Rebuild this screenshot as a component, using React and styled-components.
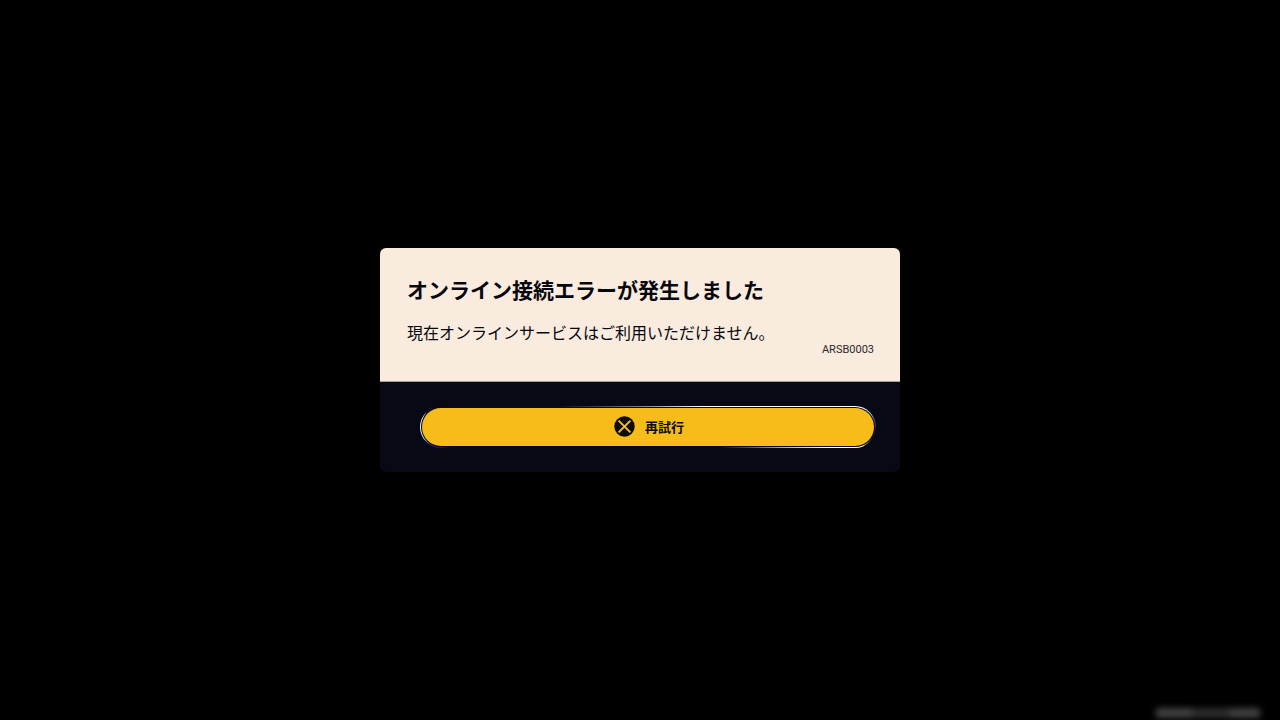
import React from 'react';
import styled, { createGlobalStyle } from 'styled-components'

const GlobalStyle = createGlobalStyle`
  * {
    box-sizing: border-box;
  }

  body {
    margin: 0;
    background-color: #000;
    font-family: 'Noto Sans CJK JP', sans-serif;
  }
`

const Screen = styled.main`
  display: flex;
  align-items: center;
  justify-content: center;
  min-height: 100vh;
`

const Dialog = styled.section`
  width: 100%;
  max-width: 520px;
  border-radius: 6px;
  overflow: hidden;
  background-color: #070914;
`

const Message = styled.div`
  display: flex;
  flex-direction: column;
  padding: 26px 26px 24px 27px;
  background-color: #f9ecdf;
  border-bottom: 1px solid #a9a29d;
  color: #07070d;
`

const Title = styled.h1`
  margin: 0 0 17px;
  font-size: 21px;
  font-weight: 700;
  line-height: 30px;
`

const Text = styled.p`
  margin: 0;
  font-size: 16px;
  line-height: 22px;
`

const ErrorCode = styled.span`
  align-self: flex-end;
  font-family: Roboto, sans-serif;
  font-size: 11px;
  line-height: 14px;
  color: #2b2729;
`

const Actions = styled.div`
  padding: 24px 24px 24px 40px;
`

/* light that runs round the focused button, one gradient for each half */
const FocusRing = styled.div`
  padding: 1px;
  border-radius: 21px;
  background-image:
    linear-gradient(
      to right,
      #e8f4f5 0,
      #e8f4f5 3px,
      transparent 7px,
      transparent 30%,
      #8d8b95 50%,
      #fff 62%,
      #fff calc(100% - 10px),
      #8fd0ee calc(100% - 4px),
      #6a1fa8 calc(100% - 1px)
    ),
    linear-gradient(
      to right,
      #fff 0,
      #e8f4f5 2px,
      #79bde6 5px,
      #5b1696 10px,
      transparent 32px,
      transparent 66%,
      #b9aecb 80%,
      #fff 90%,
      #fff calc(100% - 14px),
      transparent calc(100% - 4px),
      #3a1263 100%
    );
  background-position: top, bottom;
  background-size: 100% 50%;
  background-repeat: no-repeat;
`

const Gap = styled.div`
  padding: 1px;
  border-radius: 20px;
  background-color: #070914;
`

const RetryButton = styled.button`
  display: flex;
  align-items: center;
  justify-content: center;
  gap: 10px;
  width: 100%;
  height: 38px;
  padding: 0 0 1px 2px;
  border: none;
  border-radius: 19px;
  outline: 0;
  background-color: #f6bd1a;
  color: #0d0b0a;
  font-family: inherit;
  font-size: 13px;
  font-weight: 700;
  line-height: 20px;
  cursor: pointer;
`

const BuildInfo = styled.div`
  position: fixed;
  right: 20px;
  bottom: 2px;
  display: flex;
  filter: blur(3px);
`

const Smudge = styled.span`
  width: ${props => props.$width}px;
  height: 10px;
  background-color: ${props => props.$color};
`

function CrossIcon() {
  return (
    <svg width="21" height="21" viewBox="0 0 21 21" aria-hidden="true">
      <circle cx="10.5" cy="10.5" r="10.2" fill="#0d0b0a" />
      <path d="M4.6 4.6l11.8 11.8M16.4 4.6L4.6 16.4" stroke="#f6bd1a" strokeWidth="2" fill="none" />
    </svg>
  )
}

class App extends React.Component {

  render() {
    return (
      <Screen>
        <GlobalStyle />

        <Dialog role="alertdialog" aria-labelledby="title" aria-describedby="text">
          <Message>
            <Title id="title">オンライン接続エラーが発生しました</Title>
            <Text id="text">現在オンラインサービスはご利用いただけません。</Text>
            <ErrorCode>ARSB0003</ErrorCode>
          </Message>

          <Actions>
            <FocusRing>
              <Gap>
                <RetryButton type="button">
                  <CrossIcon />
                  再試行
                </RetryButton>
              </Gap>
            </FocusRing>
          </Actions>
        </Dialog>

        <BuildInfo aria-hidden="true">
          <Smudge $width={36} $color="#404040" />
          <Smudge $width={38} $color="#2c2c2c" />
          <Smudge $width={30} $color="#404040" />
        </BuildInfo>
      </Screen>
    );
  }
}

export default App;
